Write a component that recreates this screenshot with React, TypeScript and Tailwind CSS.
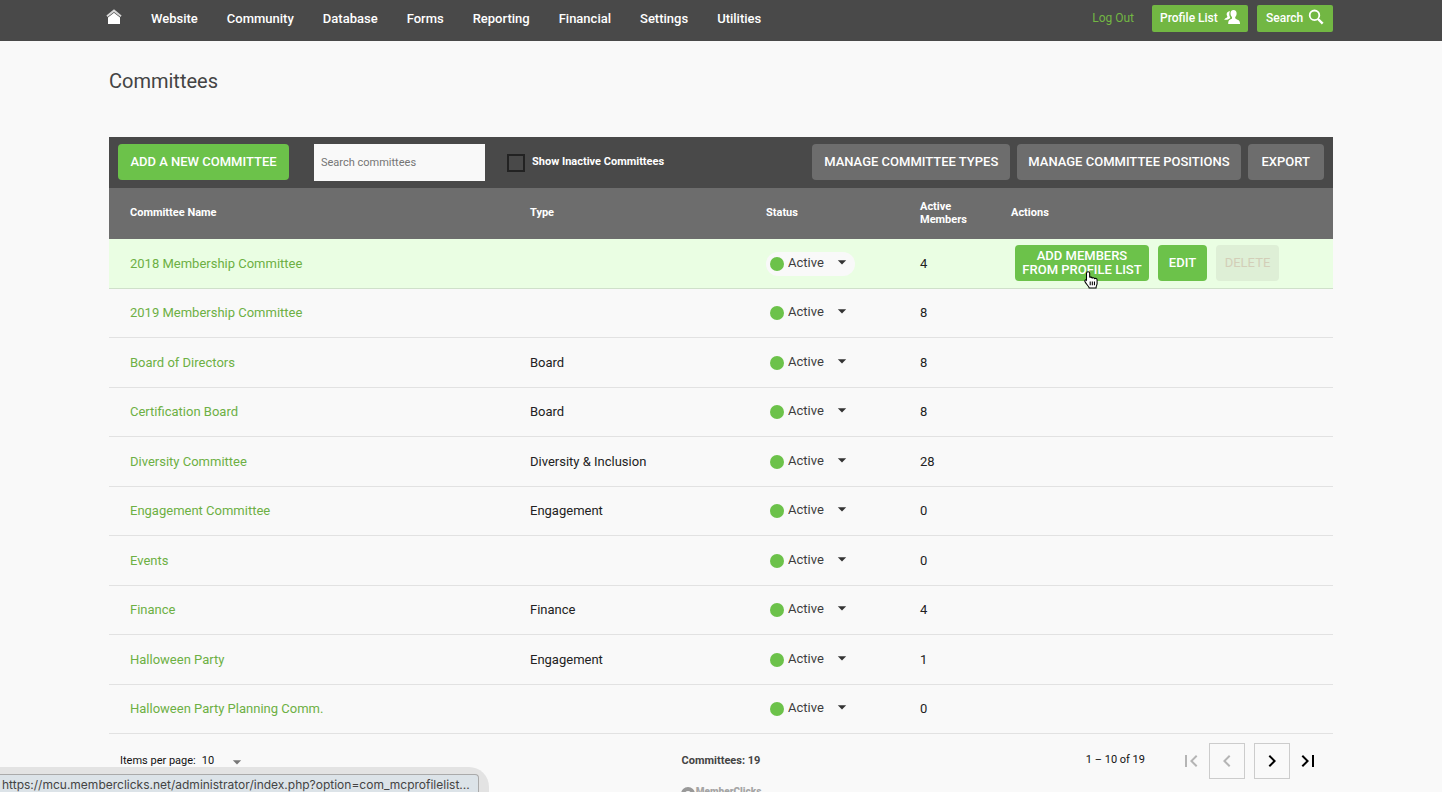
import { useState } from "react";
import { MdArrowDropDown, MdChevronLeft, MdChevronRight, MdFirstPage, MdLastPage } from "react-icons/md";

interface Committee {
    name: string;
    type?: string;
    members: number;
}

const NAV = ["Website", "Community", "Database", "Forms", "Reporting", "Financial", "Settings", "Utilities"];

const COMMITTEES: Committee[] = [
    { name: "2018 Membership Committee", members: 4 },
    { name: "2019 Membership Committee", members: 8 },
    { name: "Board of Directors", type: "Board", members: 8 },
    { name: "Certification Board", type: "Board", members: 8 },
    { name: "Diversity Committee", type: "Diversity & Inclusion", members: 28 },
    { name: "Engagement Committee", type: "Engagement", members: 0 },
    { name: "Events", members: 0 },
    { name: "Finance", type: "Finance", members: 4 },
    { name: "Halloween Party", type: "Engagement", members: 1 },
    { name: "Halloween Party Planning Comm.", members: 0 },
];

function HomeIcon() {
    return (
        <svg viewBox="0 0 16 16" className="mb-1 h-4 w-4" aria-hidden="true">
            <path d="M8 .3 15.600 6.500l-1.100 1.500L8 2.900 1.500 8 .4 6.500z" fill="#d6d6d6" />
            <path d="M8 3.800 14 8.600V15H2V8.600z" fill="#fff" />
        </svg>
    );
}

function PeopleIcon() {
    return (
        <svg viewBox="0 0 16 16" className="mb-0.5 h-4 w-4" fill="#fff" aria-hidden="true">
            <path d="M4.600 2.500c.8-.4 1.400-.3 1.400-.3-1 1.800-1 4.300.3 6.300-.3 1-1.300 1.300-3 2.300H.2c.3-1 1.300-1.500 2.800-2.300.5-.3.4-1 .1-1.400C2.200 5.500 2.500 3.200 4.600 2.500z" />
            <path d="M9.500 1c2.200 0 3.200 1.500 3.100 3.500 0 1.400-.5 2.600-1.300 3.600-.4 1 0 1.600.8 2 2.400 1 3.800 1.500 4 4.900H4.200c.1-3.400 1-3.900 3-4.900.8-.4 1.100-1 .7-2-.8-1-1.400-2.200-1.400-3.600C6.400 2.500 7.300 1 9.500 1z" />
        </svg>
    );
}

function SearchIcon() {
    return (
        <svg viewBox="0 0 16 16" className="mb-0.5 h-4 w-4" fill="none" stroke="#fff" aria-hidden="true">
            <circle cx="6.500" cy="6.300" r="4.800" strokeWidth="1.800" />
            <path d="m10 10 4.700 4.700" strokeWidth="2.400" />
        </svg>
    );
}

function HandCursor() {
    return (
        <svg viewBox="0.5 0.5 13.5 17" className="pointer-events-none absolute top-[26px] left-[68px] h-[18px] w-4" aria-hidden="true">
            <path
                d="M4.500 1.200c1 0 1.500.7 1.500 1.500v4c.3-.6 2-.6 2.400.4.500-.5 2-.4 2.300.6.700-.5 2.300-.2 2.300 1.200v3.300c0 1.500-1 2.300-1 4.300H5.500c-.3-1.700-3-3.800-4-6-.6-1.300.7-2 1.500-1.300V2.700c0-.8.5-1.500 1.500-1.500z"
                fill="#fff"
                stroke="#000"
            />
            <path d="M6.500 10.500v3.500M8.500 10.500v3.500M10.500 10.500v3.500" stroke="#000" />
        </svg>
    );
}

function StatusSelect({ name, highlighted }: { name: string; highlighted: boolean }) {
    return (
        <div className={`relative flex h-6 w-[89px] items-center rounded-full pl-1 ${highlighted ? "bg-[#f9f9f9]" : ""}`}>
            <span className="h-3.5 w-3.5 shrink-0 rounded-full bg-[#6cc24a]" />
            <select
                aria-label={`Status of ${name}`}
                className="h-6 w-full appearance-none bg-transparent pb-0.5 pl-1 text-[13px] text-[#3d3d3d] outline-none"
            >
                <option>Active</option>
                <option>Inactive</option>
            </select>
            <MdArrowDropDown className="pointer-events-none absolute right-[3px] mb-1 h-5 w-5 text-[#333]" />
        </div>
    );
}

function RowActions() {
    return (
        <div className="flex items-center gap-[9px] pb-0.5 pl-1">
            <button className="relative h-9 w-[134px] rounded bg-[#6cc24a] text-[13px] leading-[14px] font-medium text-white">
                ADD MEMBERS
                <br />
                FROM PROFILE LIST
                <HandCursor />
            </button>
            <button className="h-9 w-[49px] rounded bg-[#6cc24a] text-[13px] font-medium text-white">EDIT</button>
            <button disabled className="h-9 w-[63px] rounded bg-[#deefd6] text-[13px] text-[#d3ceb8]">
                DELETE
            </button>
        </div>
    );
}

export default function App() {
    const [query, setQuery] = useState("");
    const [showInactive, setShowInactive] = useState(false);

    const toolButton = "h-9 rounded text-[13px] font-medium text-white";
    const rows = COMMITTEES.filter((c) => c.name.toLowerCase().includes(query.toLowerCase()));

    return (
        <div className="h-screen overflow-hidden bg-[#f9f9f9] font-['Roboto',sans-serif] text-[13px] text-[#222]">
            <header className="bg-[#494949]">
                <div className="mx-auto flex h-[41px] max-w-[1230px] justify-between pr-[3px]">
                    <nav className="flex h-[38px] items-center gap-[29px] font-medium text-white">
                        <a href="#home" aria-label="Home">
                            <HomeIcon />
                        </a>
                        {NAV.map((item) => (
                            <a key={item} href={`#${item.toLowerCase()}`}>
                                {item}
                            </a>
                        ))}
                    </nav>
                    <div className="flex h-9 items-center gap-[9px] text-xs">
                        <a href="#logout" className="mr-[9px] text-[#72b743]">
                            Log Out
                        </a>
                        <button className="flex h-[27px] w-24 items-center justify-between rounded-xs bg-[#72b743] px-2 font-medium text-white">
                            Profile List
                            <PeopleIcon />
                        </button>
                        <button className="flex h-[27px] w-[76px] items-center justify-between rounded-xs bg-[#72b743] px-[9px] font-medium text-white">
                            Search
                            <SearchIcon />
                        </button>
                    </div>
                </div>
            </header>

            <main className="mx-auto max-w-[1224px]">
                <h1 className="pt-[26px] pb-[42px] text-xl text-[#444]">Committees</h1>

                {/* Toolbar */}
                <div className="flex h-[51px] items-start bg-[#494949] px-[9px] pt-[7px]">
                    <button className={`${toolButton} w-[171px] bg-[#6cc24a]`}>ADD A NEW COMMITTEE</button>
                    <input
                        type="text"
                        aria-label="Search committees"
                        placeholder="Search committees"
                        value={query}
                        onChange={(e) => setQuery(e.target.value)}
                        className="ml-[25px] h-[37px] w-[171px] bg-[#f9f9f9] px-[7px] text-[11px] outline-none placeholder:text-[#757575]"
                    />
                    <label className="ml-[22px] flex h-[37px] items-center gap-[7px] text-[11px] font-bold text-white">
                        <input
                            type="checkbox"
                            checked={showInactive}
                            onChange={(e) => setShowInactive(e.target.checked)}
                            className="h-[18px] w-[18px] appearance-none border-2 border-[#222] checked:bg-[#6cc24a]"
                        />
                        Show Inactive Committees
                    </label>
                    <div className="ml-auto flex gap-[7px]">
                        <button className={`${toolButton} bg-[#6d6d6d] px-3`}>MANAGE COMMITTEE TYPES</button>
                        <button className={`${toolButton} bg-[#6d6d6d] px-[11px]`}>MANAGE COMMITTEE POSITIONS</button>
                        <button className={`${toolButton} bg-[#6d6d6d] px-3.5`}>EXPORT</button>
                    </div>
                </div>

                <table className="w-full table-fixed border-separate border-spacing-0">
                    <thead>
                        <tr className="h-[51px] bg-[#6d6d6d] text-left text-[11px] leading-[13px] text-white *:pb-0.5">
                            <th className="pl-[21px]">Committee Name</th>
                            <th className="w-[236px]">Type</th>
                            <th className="w-[154px]">Status</th>
                            <th className="w-[91px]">
                                Active
                                <br />
                                Members
                            </th>
                            <th className="w-[322px]">Actions</th>
                        </tr>
                    </thead>
                    <tbody>
                        {rows.map((c, i) => (
                            <tr
                                key={c.name}
                                className={`odd:h-[50px] even:h-[49px] *:border-b ${i === 0 ? "bg-[#eafee3] *:border-[#cfe0ca]" : "*:border-[#e2e2e2]"}`}
                            >
                                <td className="pl-[21px]">
                                    <a href="#committee" className="text-[#6db044]">
                                        {c.name}
                                    </a>
                                </td>
                                <td>{c.type}</td>
                                <td>
                                    <StatusSelect name={c.name} highlighted={i === 0} />
                                </td>
                                <td>{c.members}</td>
                                <td>{i === 0 && <RowActions />}</td>
                            </tr>
                        ))}
                    </tbody>
                </table>

                {/* Paginator */}
                <div className="grid h-[53px] grid-cols-[1fr_auto_1fr] items-center text-[11px] text-[#111]">
                    <label className="flex items-center gap-1.5 pt-0.5 pl-[11px]">
                        Items per page:
                        <span className="relative flex items-center">
                            <select className="w-[45px] appearance-none bg-transparent outline-none">
                                <option>10</option>
                                <option>25</option>
                                <option>50</option>
                            </select>
                            <MdArrowDropDown className="pointer-events-none absolute right-0 h-5 w-5 text-[#777]" />
                        </span>
                    </label>
                    <p className="pt-0.5 font-bold text-[#444]">Committees: 19</p>
                    <div className="flex items-center justify-end pr-[7px] text-2xl">
                        <span className="mr-7 text-[11px]">1 – 10 of 19</span>
                        <button disabled aria-label="First page" className="flex h-9 w-9 items-center justify-center text-[#b5b5b5]">
                            <MdFirstPage />
                        </button>
                        <div className="flex gap-[9px]">
                            <button disabled aria-label="Previous page" className="flex h-9 w-9 items-center justify-center border border-[#ccc] text-[#b5b5b5]">
                                <MdChevronLeft />
                            </button>
                            <button aria-label="Next page" className="flex h-9 w-9 items-center justify-center border border-[#ccc] text-black">
                                <MdChevronRight />
                            </button>
                        </div>
                        <button aria-label="Last page" className="flex h-9 w-9 items-center justify-center text-black">
                            <MdLastPage />
                        </button>
                    </div>
                </div>

                <footer className="flex items-start justify-center gap-px text-[10px] leading-[10px] font-black text-[#a5a5a5]">
                    <svg viewBox="0 0 14 14" className="h-3.5 w-3.5" aria-hidden="true">
                        <circle cx="7" cy="7" r="5" fill="none" stroke="#999" strokeWidth="4" />
                    </svg>
                    MemberClicks
                </footer>
            </main>

            {/* Link preview in the corner of the window */}
            <div className="fixed bottom-0 left-0 rounded-tr-[20px] bg-[#e3e3e3] pt-[7px] pr-2.5">
                <div className="h-[18px] rounded-tr border-t border-r border-[#aaa] bg-[#dce3e8] pr-2 pl-0.5 font-['Inter',sans-serif] text-xs leading-[19px] text-[#444]">
                    https://mcu.memberclicks.net/administrator/index.php?option=com_mcprofilelist...
                </div>
            </div>
        </div>
    );
}
